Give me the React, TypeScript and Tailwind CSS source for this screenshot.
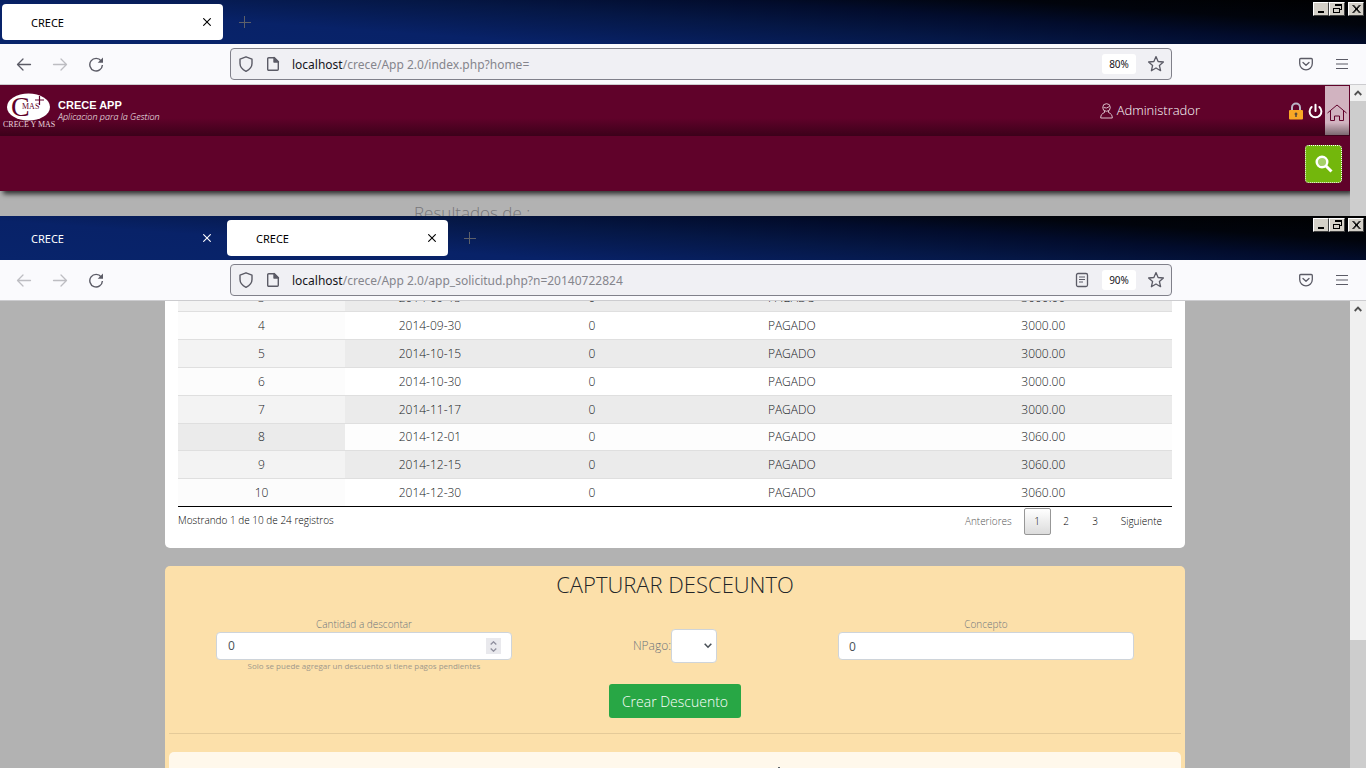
import type { ReactNode } from "react";

const rows = [
  ["3", "2014-09-15", "3000.00"],
  ["4", "2014-09-30", "3000.00"],
  ["5", "2014-10-15", "3000.00"],
  ["6", "2014-10-30", "3000.00"],
  ["7", "2014-11-17", "3000.00"],
  ["8", "2014-12-01", "3060.00"],
  ["9", "2014-12-15", "3060.00"],
  ["10", "2014-12-30", "3060.00"],
];

function rowColors(n: string) {
  if (n === "8") return ["bg-[#ebebeb]", "h-[27px] bg-[#fdfdfd]"];
  return Number(n) % 2 ? ["bg-[#f3f3f3]", "h-7 bg-[#ebebeb]"] : ["bg-[#fcfcfc]", "h-7 bg-white"];
}

function Arrow({ back, faded }: { back?: boolean; faded?: boolean }) {
  return (
    <button aria-label={back ? "Atrás" : "Adelante"} className={faded ? "text-[#bdbdc2]" : "text-[#5b5b66]"}>
      <svg width="16" height="16" viewBox="0 0 16 16" fill="none" stroke="currentColor" strokeWidth="1.3" strokeLinecap="round" strokeLinejoin="round">
        {back ? <path d="M14.5 8.5H1.500M7 3 1.500 8.500 7 14" /> : <path d="M1.500 8.500h13M9 3l5.500 5.500L9 14" />}
      </svg>
    </button>
  );
}

function Tab({ active }: { active?: boolean }) {
  return (
    <div className={`flex h-9 w-[221px] items-center justify-between rounded pr-3 pl-[29px] ${active ? "bg-white text-black" : "text-white"}`}>
      <span className="pt-0.5">CRECE</span>
      <button aria-label="Cerrar pestaña">
        <svg width="8" height="8" viewBox="0 0 8 8" stroke="currentColor" strokeWidth="1.1" className="block">
          <path d="M.3.3l7.4 7.4M7.7.3.3 7.7" />
        </svg>
      </button>
    </div>
  );
}

function WindowButton({ label, children }: { label: string; children: ReactNode }) {
  return (
    <button aria-label={label} className="h-[14px] w-4 border border-t-white border-r-[#404040] border-b-[#404040] border-l-white bg-[#d4d0c8]">
      <svg width="14" height="12" viewBox="0 0 14 12" fill="none" stroke="#000" shapeRendering="crispEdges">
        {children}
      </svg>
    </button>
  );
}

function BrowserChrome({ tabs, path, zoom, canGoBack, reader }: { tabs: boolean[]; path: string; zoom: string; canGoBack?: boolean; reader?: boolean }) {
  return (
    <div className="shrink-0 font-['Noto_Sans',sans-serif]">
      <div className="flex h-11 items-start justify-between bg-[linear-gradient(4deg,#08246b_0%,#082268_28%,#051745_52%,#020c2c_68%,#01040c_82%,#000_100%)]">
        <div className="flex items-center gap-1 pt-1 pl-0.5 text-[11px]">
          {tabs.map((active, i) => (
            <Tab key={i} active={active} />
          ))}
          <button aria-label="Nueva pestaña" className="ml-3 text-[#5d6069]">
            <svg width="12" height="12" viewBox="0 0 12 12" stroke="currentColor" className="block">
              <path d="M0 6.5h12M5.500 0v12" />
            </svg>
          </button>
        </div>
        <div className="flex pt-0.5 pr-0.5">
          <WindowButton label="Minimizar">
            <path d="M4 9h6" strokeWidth="2" />
          </WindowButton>
          <WindowButton label="Restaurar">
            <path d="M5.5 3V1.5h6v5H10M5 2h7M3.5 5.5h6v4h-6zM3 5h7" />
          </WindowButton>
          <div className="w-[3px]" />
          <WindowButton label="Cerrar">
            <path d="M3.5 2l7 8M4.5 2l7 8M10.5 2l-7 8M11.5 2l-7 8" shapeRendering="auto" />
          </WindowButton>
        </div>
      </div>
      <div className="flex h-[41px] items-center justify-between border-b border-[#cccccf] bg-[#fafafd] text-[#5b5b66]">
        <div className="flex items-center gap-5 pl-4">
          <Arrow back faded={!canGoBack} />
          <Arrow faded />
          <button aria-label="Recargar">
            <svg width="16" height="16" viewBox="0 0 16 16" fill="none" stroke="currentColor" strokeWidth="1.4">
              <path d="M13.200 5A6.300 6.300 0 1 0 14.400 9" />
              <path d="M15 1.500v5.300H9.700z" fill="currentColor" stroke="none" />
            </svg>
          </button>
        </div>
        <div className="ml-[126px] flex h-8 max-w-[942px] flex-1 items-center rounded border border-[#80808a] bg-[#f0f0f4] pr-1.5 pl-[7px]">
          <svg width="16" height="16" viewBox="0 0 16 16" fill="none" stroke="currentColor" strokeWidth="1.4" strokeLinejoin="round">
            <path d="M8 .8 14 3.200v4.300c0 3.500-2.500 6-6 7.800-3.500-1.800-6-4.300-6-7.800V3.200z" />
          </svg>
          <svg width="14" height="16" viewBox="0 0 14 16" fill="none" stroke="currentColor" strokeWidth="1.400" strokeLinejoin="round" className="ml-3">
            <path d="M2.700 1.700h5.600l4 4v7.600a1 1 0 0 1-1 1H2.700a1 1 0 0 1-1-1V2.700a1 1 0 0 1 1-1z" />
            <path d="M8 1.500v4.500h4.500z" fill="currentColor" />
          </svg>
          <span className="ml-3 flex-1 pt-0.5 text-[12px] whitespace-nowrap text-[#85858c]">
            <span className="text-[#15141a]">localhost</span>
            {path}
          </span>
          {reader && (
            <button aria-label="Vista de lectura" className="mr-[13px]">
              <svg width="14" height="16" viewBox="0 0 14 16" fill="none" stroke="currentColor" strokeWidth="1.300" className="block">
                <rect x="1.500" y="1.500" width="11" height="13" rx="1.500" />
                <path d="M4 5h6M4 7.500h6M4 10h4" strokeWidth="1" />
              </svg>
            </button>
          )}
          <button className="mr-[11px] h-5 w-[34px] rounded-[3px] bg-white pt-px text-[10px] text-[#15141a]">{zoom}</button>
          <button aria-label="Marcador">
            <svg width="18" height="18" viewBox="0 0 18 18" fill="none" stroke="currentColor" strokeWidth="1.300" strokeLinejoin="round" className="block">
              <path d="m9 1.600 2.100 4.900 5.300.5-4 3.500 1.200 5.200L9 13l-4.600 2.700 1.200-5.200-4-3.500 5.300-.5z" />
            </svg>
          </button>
        </div>
        <div className="ml-auto flex items-center gap-[23px] pr-[18px]">
          <button aria-label="Guardar en Pocket">
            <svg width="14" height="14" viewBox="0 0 14 14" fill="none" stroke="currentColor" strokeWidth="1.300" strokeLinecap="round" strokeLinejoin="round">
              <path d="M1.700 1.500h10.600a1 1 0 0 1 1 1V6.500a6.300 6.300 0 0 1-12.600 0v-4a1 1 0 0 1 1-1z" />
              <path d="M4 5.500l3 2.800 3-2.800" />
            </svg>
          </button>
          <button aria-label="Menú">
            <svg width="12" height="12" viewBox="0 0 12 12" stroke="currentColor">
              <path d="M0 1.500h12M0 6h12M0 10.500h12" strokeWidth="1.100" />
            </svg>
          </button>
        </div>
      </div>
    </div>
  );
}

function ScrollUp() {
  return (
    <div className="flex h-4 items-center justify-center bg-[#f0f0f0]">
      <svg width="8" height="6" viewBox="0 0 8 6" fill="none" stroke="#505050" strokeWidth="1.800">
        <path d="M.7 5 4 1.600 7.300 5" />
      </svg>
    </div>
  );
}

function Logo() {
  return (
    <svg width="56" height="38" viewBox="0 0 56 38" fontFamily="'Liberation Serif', serif">
      <ellipse cx="28.500" cy="15" rx="21.500" ry="13.500" fill="#fff" />
      <text x="11" y="24" fontSize="28" fill="#60022a">C</text>
      <rect x="22" y="10" width="18" height="8" fill="#fff" />
      <text x="22" y="17" fontSize="8" fill="#60022a">MAS</text>
      <path d="M39.500 4v9M35 8h9" stroke="#60022a" strokeWidth="1.200" />
      <text x="3" y="35" fontSize="8" fill="#e8d5dd">CRECE Y MAS</text>
    </svg>
  );
}

function HomeApp() {
  return (
    <div className="flex min-h-0 flex-1">
      <div className="min-w-0 flex-1 overflow-hidden bg-[#b2b2b2]">
        <div className="shadow-[3px_3px_5px_rgba(0,0,0,0.75)]">
          <header className="flex h-[51px] items-center bg-[linear-gradient(#60022a_65%,#3c011a)] text-white">
            <Logo />
            <div className="ml-0.5 flex-1">
              <h1 className="font-['Liberation_Sans',sans-serif] text-[11px] leading-3 font-bold">CRECE APP</h1>
              <p className="text-[9px] leading-3 font-light italic">Aplicacion para la Gestion</p>
            </div>
            <div className="flex items-center gap-1 text-[13px] font-light">
              <svg width="13" height="16" viewBox="0 0 13 16" fill="none" stroke="#d9bcc8" strokeWidth="1">
                <circle cx="6.500" cy="4.500" r="3.800" />
                <path d="M3.500 4.500q3 1.500 6-1M4.500 8v1.500C2 10.500.7 12 .7 15h11.600c0-3-1.300-4.500-3.800-5.500V8" />
              </svg>
              Administrador
            </div>
            <div className="ml-[89px] flex items-center gap-1">
              <svg width="14" height="18" viewBox="0 0 14 18">
                <path d="M3 9V5.500a4 4 0 0 1 8 0V9" fill="none" stroke="#b9b4c4" strokeWidth="2" />
                <rect y="8" width="14" height="9.500" rx="1" fill="#f9a825" />
                <path d="M7 10.500a1.500 1.500 0 0 1 .8 2.700V15H6.200v-1.800A1.500 1.500 0 0 1 7 10.500z" fill="#5d4b3c" />
              </svg>
              <button aria-label="Salir">
                <svg width="16" height="16" viewBox="0 0 16 16" fill="none" stroke="#fff" strokeWidth="2" strokeLinecap="round" className="block">
                  <path d="M4.600 4a5.900 5.900 0 1 0 7.800 0M8.500 1.800v6.200" />
                </svg>
              </button>
              <a href="#inicio" aria-label="Inicio" className="mr-px -ml-0.5 flex h-[49px] w-6 items-center justify-center bg-[linear-gradient(#d1b3c0_75%,#7b6870)]">
                <svg width="20" height="18" viewBox="0 0 20 18" fill="none" stroke="#60022a" strokeWidth="1" className="mt-1">
                  <path d="M.5 9 10 1l9.500 8M3.500 7v9.500h4V12h5v4.500h4V7" />
                </svg>
              </a>
            </div>
          </header>
          <div className="flex h-[55px] items-center justify-end bg-[#60022a] pr-2">
            <button aria-label="Buscar" className="flex h-[38px] w-[37px] items-center justify-center rounded border border-dotted border-white bg-[#73b70c]">
              <svg width="18" height="18" viewBox="0 0 18 18" fill="none" stroke="#fff">
                <circle cx="7" cy="7" r="5.300" strokeWidth="2.400" fill="#a5d06a" />
                <path d="m11 11 5.500 5.500" strokeWidth="3" />
              </svg>
            </button>
          </div>
        </div>
        <h2 className="pt-3 pl-[414px] text-[17px] leading-5 font-light text-[#77777a]">Resultados de :</h2>
      </div>
      <div className="w-4 bg-[#cdcdcd]">
        <ScrollUp />
      </div>
    </div>
  );
}

function PaymentsTable() {
  return (
    <section className="rounded-[5px] bg-white px-[13px] pb-[13px]">
      <table className="w-full table-fixed border-b border-black text-center text-[12px] leading-4 font-light text-[#16191c]">
        <colgroup>
          <col className="w-[16.8%]" />
          <col className="w-[17.1%]" />
          <col className="w-[15.5%]" />
          <col className="w-[24.7%]" />
          <col />
        </colgroup>
        <tbody>
          {rows.map(([n, date, amount]) => {
            const [first, rest] = rowColors(n);
            return (
              <tr key={n} className={`border-t border-[#dfdfdf] ${rest}`}>
                <td className={first}>{n}</td>
                <td>{date}</td>
                <td>0</td>
                <td>PAGADO</td>
                <td>{amount}</td>
              </tr>
            );
          })}
        </tbody>
      </table>
      <div className="flex items-start justify-between pt-px text-[10px] font-light text-black">
        <p className="pt-1 leading-4">Mostrando 1 de 10 de 24 registros</p>
        <nav className="flex h-[27px] items-center gap-0.5">
          <button className="px-2.5 text-[#555]">Anteriores</button>
          <button className="h-[27px] w-[27px] rounded-[2px] border border-[#979797] bg-linear-to-b from-white to-[#dcdcdc]">1</button>
          <button className="w-[27px]">2</button>
          <button className="w-[27px]">3</button>
          <button className="px-2.5">Siguiente</button>
        </nav>
      </div>
    </section>
  );
}

function DiscountForm() {
  return (
    <section className="mt-[18px] flex-1 rounded-t-[5px] bg-[#fce0aa] px-1 font-light">
      <h2 className="pt-1 text-center text-[22px] leading-7 text-[#212529]">CAPTURAR DESCEUNTO</h2>
      <form onSubmit={(e) => e.preventDefault()}>
        <div className="flex items-start justify-between px-[47px] pt-[18px] text-[#6c757d]">
          <div className="flex w-[296px] flex-col text-center">
            <label htmlFor="cantidad" className="text-[10px] leading-4">Cantidad a descontar</label>
            <div className="flex h-7 items-center rounded-[4px] border border-[#ced4da] bg-white pr-2.5 pl-[11px]">
              <input id="cantidad" defaultValue="0" inputMode="numeric" className="min-w-0 flex-1 text-[12px] font-normal text-[#495057] outline-none" />
              <span className="flex h-4 w-[15px] items-center justify-center bg-[#e9e9ed]">
                <svg width="7" height="11" viewBox="0 0 7 11" fill="none" stroke="#8f8f9d" strokeWidth="1.300">
                  <path d="M.7 3.500 3.500.8l2.800 2.700M.7 7.500l2.800 2.700 2.800-2.700" />
                </svg>
              </span>
            </div>
            <small className="text-[8px] leading-[11px] font-normal text-[#a0998a]">Solo se puede agregar un descuento si tiene pagos pendientes</small>
          </div>
          <div className="flex items-center pt-[13px] text-[12px]">
            <label htmlFor="npago">NPago:</label>
            <span className="relative">
              <select id="npago" className="block h-[34px] w-[46px] appearance-none rounded-[4px] border border-[#ced4da] bg-white" />
              <svg width="8" height="6" viewBox="0 0 8 6" fill="none" stroke="#495057" strokeWidth="1.600" className="pointer-events-none absolute top-[14px] right-[5px]">
                <path d="M.7.8 4 4.200 7.300.8" />
              </svg>
            </span>
          </div>
          <div className="flex w-[296px] flex-col text-center">
            <label htmlFor="concepto" className="text-[10px] leading-4">Concepto</label>
            <input id="concepto" defaultValue="0" className="h-7 rounded-[4px] border border-[#ced4da] bg-white px-2.5 text-[12px] font-normal text-[#495057]" />
          </div>
        </div>
        <div className="flex justify-center border-b border-[#e4ca99] pt-[13px] pb-[15px]">
          <button className="h-[34px] w-[132px] rounded-[3px] bg-[#28a745] text-[14px] text-white">Crear Descuento</button>
        </div>
      </form>
      <div className="mt-[18px] h-11 rounded-[5px] bg-[#fff8eb] pt-[15px] pl-[60%]">
        <div className="ml-0.5 h-px w-0.5 bg-[#5b6166]" />
      </div>
    </section>
  );
}

export default function App() {
  return (
    <main className="flex h-screen flex-col overflow-hidden bg-[#b2b2b2] font-['Open_Sans',sans-serif]">
      <section className="flex h-[216px] shrink-0 flex-col overflow-hidden">
        <BrowserChrome tabs={[true]} path="/crece/App 2.0/index.php?home=" zoom="80%" canGoBack />
        <HomeApp />
      </section>
      <section className="flex min-h-0 flex-1 flex-col">
        <BrowserChrome tabs={[false, true]} path="/crece/App 2.0/app_solicitud.php?n=20140722824" zoom="90%" reader />
        <div className="flex min-h-0 flex-1">
          <div className="min-w-0 flex-1 overflow-hidden">
            <div className="mx-auto -mt-[18px] flex max-w-[1020px] flex-col">
              <PaymentsTable />
              <DiscountForm />
            </div>
          </div>
          <div className="flex w-4 flex-col bg-[#f0f0f0]">
            <ScrollUp />
            <div className="mt-auto h-[128px] bg-[#cdcdcd]" />
          </div>
        </div>
      </section>
    </main>
  );
}
